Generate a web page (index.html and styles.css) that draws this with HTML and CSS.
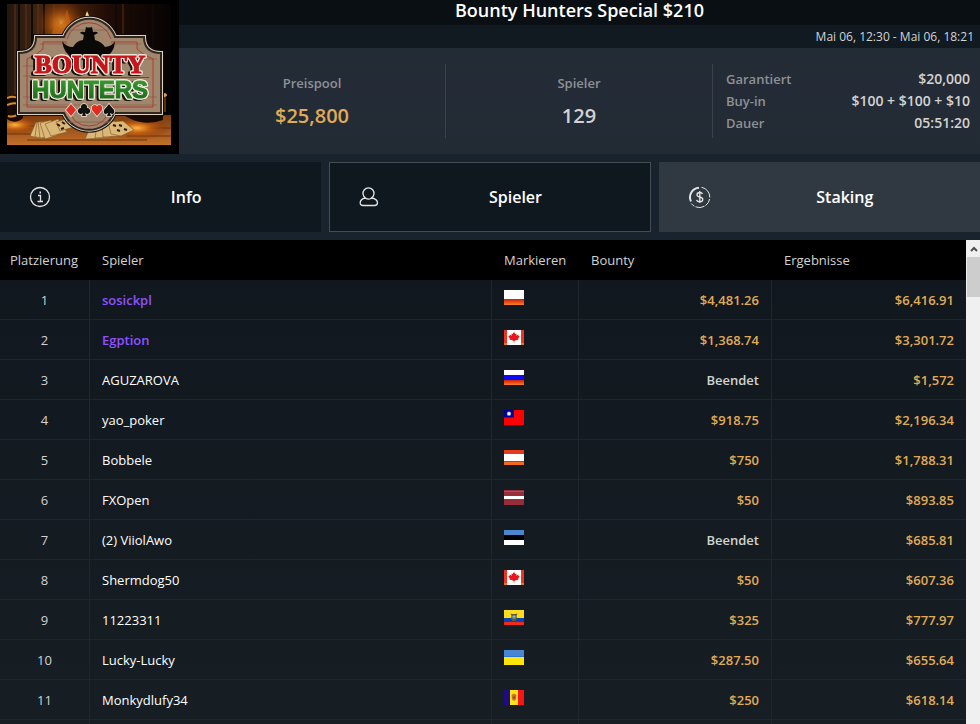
FILE: index.html
```html
<!DOCTYPE html>
<html lang="de">
<head>
    <meta charset="UTF-8">
    <meta name="viewport" content="width=device-width, initial-scale=1.0">
    <title>Bounty Hunters Special $210</title>
    <link rel="stylesheet" href="styles.css">
</head>
<body>
    <!-- Shared flag drawings -->
    <svg class="defs" width="0" height="0" aria-hidden="true">
        <defs>
            <linearGradient id="red-orange" x1="0" y1="0" x2="0" y2="1">
                <stop offset="0" stop-color="#d31a10"/>
                <stop offset="1" stop-color="#f5821e"/>
            </linearGradient>
            <symbol id="flag-pl" viewBox="0 0 20 15">
                <rect width="20" height="9" fill="#fff"/>
                <rect y="9" width="20" height="6" fill="url(#red-orange)"/>
            </symbol>
            <symbol id="flag-ca" viewBox="0 0 20 15">
                <rect width="20" height="15" fill="#fff"/>
                <rect width="3" height="15" fill="#f0321e"/>
                <rect x="17" width="3" height="15" fill="#f0321e"/>
                <rect y="13" width="3" height="2" fill="#f5701e"/>
                <rect x="17" y="13" width="3" height="2" fill="#f5701e"/>
                <path d="M10 2l1.3 2 1.2-.6-.2 2.4 2-1.2.2 1.3 1.3.3-1.6 2.2.5 1.2-3 .6-1.3 1h-.8l-1.3-1-3-.6.5-1.2-1.6-2.2 1.3-.3.2-1.3 2 1.2-.2-2.4 1.2.6z" fill="#e8151c"/>
                <rect x="9.6" y="10.500" width=".9" height="2.500" fill="#f5a08c"/>
            </symbol>
            <symbol id="flag-ru" viewBox="0 0 20 15">
                <rect width="20" height="5" fill="#fff"/>
                <rect y="5" width="20" height="5" fill="#0a0af5"/>
                <rect y="10" width="20" height="5" fill="url(#red-orange)"/>
            </symbol>
            <symbol id="flag-tw" viewBox="0 0 20 15">
                <rect width="20" height="15" fill="#fe0000"/>
                <rect width="10" height="7.500" fill="#000095"/>
                <circle cx="5" cy="3.700" r="2.200" fill="#8c8cd2"/>
                <circle cx="5" cy="3.700" r="1.400" fill="#fff"/>
            </symbol>
            <symbol id="flag-at" viewBox="0 0 20 15">
                <rect width="20" height="15" fill="#fff"/>
                <rect width="20" height="4" fill="#e33b1e"/>
                <rect y="11" width="20" height="4" fill="#ef6a1c"/>
                <rect y="11" width="20" height="1" fill="#dd2a1a"/>
            </symbol>
            <symbol id="flag-lv" viewBox="0 0 20 15">
                <rect width="20" height="15" fill="#982c39"/>
                <rect y="1" width="20" height="1" fill="#b04a55"/>
                <rect y="6" width="20" height="3" fill="#fff"/>
            </symbol>
            <symbol id="flag-ee" viewBox="0 0 20 15">
                <rect width="20" height="5" fill="#4a86cc"/>
                <rect y="5" width="20" height="5" fill="#000"/>
                <rect y="10" width="20" height="5" fill="#fff"/>
            </symbol>
            <symbol id="flag-ec" viewBox="0 0 20 15">
                <rect width="20" height="8" fill="#fbdc1e"/>
                <rect y="8" width="20" height="4" fill="#0842b4"/>
                <rect y="12" width="20" height="3" fill="#ef2b1c"/>
                <path d="M6.500 3.500q3.500 1 7 0l-1 2.500.5 2.500-1.500 2.500h-3l-1.500-2.500.5-2.500z" fill="#5d5a3a"/>
                <circle cx="10" cy="7" r="1.700" fill="#8cbcc8"/>
                <path d="M8.700 7.500h2.600l-1.300 1.300z" fill="#3c8a46"/>
            </symbol>
            <symbol id="flag-ua" viewBox="0 0 20 15">
                <rect width="20" height="8" fill="#4a86d2"/>
                <rect y="6" width="20" height="1" fill="#2f74d0"/>
                <rect y="7" width="20" height="8" fill="#ffe606"/>
            </symbol>
            <symbol id="flag-md" viewBox="0 0 20 15">
                <rect width="7" height="15" fill="#1c0c86"/>
                <rect x="6" width="8" height="15" fill="#ffe11a"/>
                <rect x="14" width="6" height="15" fill="#fa1414"/>
                <path d="M7.500 5q2.500-2.500 5 0l-.5 4.500-2 1.500-2-1.500z" fill="#c9762a"/>
                <circle cx="10" cy="7.500" r="1.200" fill="#b03a2a"/>
            </symbol>
        </defs>
    </svg>

    <div class="lobby">
        <header class="tournament">
            <div class="logo">
                <svg class="logo-art" viewBox="0 0 164 141" role="img" aria-label="Bounty Hunters">
                    <defs>
                        <linearGradient id="wall" x1="0" y1="0" x2="1" y2="0">
                            <stop offset="0" stop-color="#24170f"/>
                            <stop offset=".18" stop-color="#3d2412"/>
                            <stop offset=".35" stop-color="#4c240b"/>
                            <stop offset=".62" stop-color="#1f0c06"/>
                            <stop offset="1" stop-color="#060303"/>
                        </linearGradient>
                        <radialGradient id="fire">
                            <stop offset="0" stop-color="#ffb840"/>
                            <stop offset=".4" stop-color="#c9600f" stop-opacity=".8"/>
                            <stop offset="1" stop-color="#6b2606" stop-opacity="0"/>
                        </radialGradient>
                        <linearGradient id="desk" x1="0" y1="0" x2="0" y2="1">
                            <stop offset="0" stop-color="#7d3c0e"/>
                            <stop offset="1" stop-color="#c2702a"/>
                        </linearGradient>
                        <linearGradient id="green" x1="0" y1="0" x2="0" y2="1">
                            <stop offset="0" stop-color="#3da135"/>
                            <stop offset="1" stop-color="#17631a"/>
                        </linearGradient>
                        <path id="sign" d="M29 33H57A27 27 0 0 1 108 33H137Q137 49 154 49V109H107A27 27 0 0 1 57 109H12V49Q29 49 29 33Z"/>
                    </defs>
                    <!-- Saloon wall and table -->
                    <rect width="164" height="141" fill="url(#wall)"/>
                    <path d="M12 0V100M25 0V40M37 0V34M109 0V32M124 0V34M146 0V45" stroke="#120905" stroke-width="2"/>
                    <path d="M8 0V90M19 0V50M31 0V34M47 0V30M116 0V32" stroke="#70401b" stroke-width="1" opacity=".7"/>
                    <ellipse cx="54" cy="20" rx="26" ry="26" fill="url(#fire)" opacity=".8"/>
                    <path d="M45 30q3-10 6-16 2 10 6 3l3-12 4 15 8-8-5 22z" fill="#c9600f" opacity=".6"/>
                    <path d="M77 16l3-9 4 9z" fill="#ffd98a"/>
                    <path d="M0 111H164V141H0z" fill="url(#desk)"/>
                    <path d="M0 122H60M98 124H164M20 136H140M0 130H35M120 132H164" stroke="#713209" stroke-width="1"/>
                    <ellipse cx="8" cy="121" rx="28" ry="10" fill="url(#fire)"/>
                    <ellipse cx="130" cy="124" rx="34" ry="12" fill="url(#fire)"/>
                    <path d="M0 93q9-4 16 2v19q-8 7-16 1z" fill="#1a0a04"/>
                    <path d="M0 94q7-3 12 1M0 101q6-3 12-1M1 112q6 2 12-3" stroke="#d98c2c" stroke-width="2" fill="none"/>
                    <path d="M118 112q20-8 38-3v7q-17 6-32-1z" fill="#160903"/>
                    <path d="M151 89h8v19h-8z" fill="#54300e"/>
                    <ellipse cx="155" cy="91" rx="5" ry="2" fill="#e0a040"/>
                    <!-- Playing cards -->
                    <g fill="#d9b878" stroke="#80521f" stroke-width=".6">
                        <path d="M23 132l6-14 10 3-4 14z"/>
                        <path d="M28 133l2-15 11 1-1 15z"/>
                        <path d="M33 134l-2-16 11-1 3 16z"/>
                        <path d="M38 135l-5-16 11-3 7 15z"/>
                        <path d="M44 132l-6-12 13-5 9 13z"/>
                        <path d="M53 127l-4-9 10-3 8 8z"/>
                        <path d="M78 135l5-11 15-1 4 11z"/>
                        <path d="M88 134l2-13 12-1 2 13z"/>
                        <path d="M96 133l-1-13 12-3 6 15z"/>
                        <path d="M104 130l-3-12 15-1 11 9-13 6z"/>
                    </g>
                    <path d="M50 120l3 2M55 118l3 2M54 125l3-1M106 121l3 1M112 121l3 1M110 126l3 1M117 125l3 1" stroke="#2c1a0c" stroke-width="2"/>
                    <!-- Wooden sign -->
                    <use href="#sign" fill="#120d0b" stroke="#120d0b" stroke-width="6"/>
                    <use href="#sign" fill="#a18468" stroke="#d8d0be" stroke-width="4"/>
                    <use href="#sign" fill="#a0866d" stroke="#33261f" stroke-width="2"/>
                    <path d="M16 62H42M16 72H28M16 93H150M16 101H150M130 55H150M60 118H104M62 26H102M33 40H60M104 40H134" stroke="#896b52" stroke-width="1"/>
                    <path d="M60 38H36V45Q30 51 20 55V103H60Q66 122 82 122T104 103H146V55Q136 51 130 45V38H104M60 35A23 23 0 0 1 104 35" fill="none" stroke="#aa3f35" stroke-width="1"/>
                    <!-- Hat and shoulders -->
                    <path d="M73 29q4 3 9 3t9-3q-1-2-5-1l-1-5q-3 1-6 0l-1 5q-4-1-5 1z" fill="#0b0908"/>
                    <path d="M77 30h10l1 6q7 2 10 7 8-1 10-6-1 15-14 17H67Q57 51 55 37q4 6 11 6 3-6 10-7z" fill="#0b0908"/>
                    <path d="M23 73.500H142" stroke="#ad302b" stroke-width="1"/>
                    <g class="logo-text" text-anchor="middle">
                        <text class="word-bounty" x="83" y="69">BOUNTY</text>
                        <text class="word-hunters" x="83" y="94">HUNTERS</text>
                    </g>
                    <!-- Card suits -->
                    <g stroke="#eee4d6" stroke-width="1.500" paint-order="stroke">
                        <path d="M64 100l5 6-5 6-5-6z" fill="#e12a23"/>
                        <path d="M77 100a3 3 0 0 1 3 4 3 3 0 1 1-2 5l1 3h-4l1-3a3 3 0 1 1-2-5 3 3 0 0 1 3-4z" fill="#111"/>
                        <path d="M90 112l-5-6q-1-5 3-5 2 0 2 2 0-2 2-2 4 0 3 5z" fill="#e12a23"/>
                        <path d="M102 100l5 6q1 4-2 4l-2-1 1 3h-4l1-3-2 1q-3 0-2-4z" fill="#111"/>
                    </g>
                </svg>
            </div>

            <div class="summary">
                <h1 class="title">Bounty Hunters Special $210</h1>
                <p class="dates">Mai 06, 12:30 - Mai 06, 18:21</p>
                <div class="stats">
                    <div class="stat">
                        <span class="stat-label">Preispool</span>
                        <span class="stat-value money">$25,800</span>
                    </div>
                    <div class="stat">
                        <span class="stat-label">Spieler</span>
                        <span class="stat-value">129</span>
                    </div>
                    <dl class="details">
                        <div class="detail"><dt>Garantiert</dt><dd>$20,000</dd></div>
                        <div class="detail"><dt>Buy-in</dt><dd>$100 + $100 + $10</dd></div>
                        <div class="detail"><dt>Dauer</dt><dd>05:51:20</dd></div>
                    </dl>
                </div>
            </div>
        </header>

        <nav class="tabs">
            <button class="tab" type="button">
                <svg class="tab-icon" viewBox="0 0 24 24" aria-hidden="true">
                    <circle cx="12" cy="12" r="9.500"/>
                    <path d="M10 10.500h2.500V16M9.500 16.500h5.500"/>
                    <path d="M11.500 7.500h1.500" stroke-width="2"/>
                </svg>
                <span class="tab-label">Info</span>
            </button>
            <button class="tab tab-active" type="button">
                <svg class="tab-icon" viewBox="0 0 24 24" aria-hidden="true">
                    <path d="M8.500 13A5.500 5.500 0 1 1 14.500 13Q20.500 14 20.500 17.800 20.500 20.500 17.500 20.500H6Q3.200 20.500 3.200 17.800 3.200 14 8.500 13Q10 14.200 11.500 14.200T14.500 13"/>
                </svg>
                <span class="tab-label">Spieler</span>
            </button>
            <button class="tab tab-light" type="button">
                <svg class="tab-icon" viewBox="0 0 24 24" aria-hidden="true">
                    <path d="M14.500 2.300A10 10 0 0 1 22.800 12.500M22.600 14A10 10 0 0 1 18.500 20.600M17.500 21.200A10 10 0 0 1 8.500 21.800M7.300 21.200A10 10 0 0 1 4.300 18.500" stroke-width="1"/>
                    <path d="M12 2.800A9.500 9.500 0 0 0 4 16.500" stroke-width="2"/>
                    <path d="M15.500 9Q15 7.500 12.800 7.500 10 7.500 10 9.700 10 11.400 12.800 12 15.800 12.600 15.800 14.500 15.800 16.700 12.800 16.700 10 16.700 9.700 14.900M12.800 6v12"/>
                </svg>
                <span class="tab-label">Staking</span>
            </button>
        </nav>

        <main class="list">
            <table class="players">
                <colgroup>
                    <col class="col-rank">
                    <col>
                    <col class="col-flag">
                    <col class="col-bounty">
                    <col class="col-result">
                </colgroup>
                <thead>
                    <tr>
                        <th class="rank-head">Platzierung</th>
                        <th>Spieler</th>
                        <th>Markieren</th>
                        <th>Bounty</th>
                        <th>Ergebnisse</th>
                    </tr>
                </thead>
                <tbody>
                    <tr><td class="rank">1</td><td class="name marked">sosickpl</td><td><svg class="flag"><use href="#flag-pl"/></svg></td><td class="amount">$4,481.26</td><td class="amount">$6,416.91</td></tr>
                    <tr><td class="rank">2</td><td class="name marked">Egption</td><td><svg class="flag"><use href="#flag-ca"/></svg></td><td class="amount">$1,368.74</td><td class="amount">$3,301.72</td></tr>
                    <tr><td class="rank">3</td><td class="name">AGUZAROVA</td><td><svg class="flag"><use href="#flag-ru"/></svg></td><td class="amount ended">Beendet</td><td class="amount">$1,572</td></tr>
                    <tr><td class="rank">4</td><td class="name">yao_poker</td><td><svg class="flag"><use href="#flag-tw"/></svg></td><td class="amount">$918.75</td><td class="amount">$2,196.34</td></tr>
                    <tr><td class="rank">5</td><td class="name">Bobbele</td><td><svg class="flag"><use href="#flag-at"/></svg></td><td class="amount">$750</td><td class="amount">$1,788.31</td></tr>
                    <tr><td class="rank">6</td><td class="name">FXOpen</td><td><svg class="flag"><use href="#flag-lv"/></svg></td><td class="amount">$50</td><td class="amount">$893.85</td></tr>
                    <tr><td class="rank">7</td><td class="name">(2) ViiolAwo</td><td><svg class="flag"><use href="#flag-ee"/></svg></td><td class="amount ended">Beendet</td><td class="amount">$685.81</td></tr>
                    <tr><td class="rank">8</td><td class="name">Shermdog50</td><td><svg class="flag"><use href="#flag-ca"/></svg></td><td class="amount">$50</td><td class="amount">$607.36</td></tr>
                    <tr><td class="rank">9</td><td class="name">11223311</td><td><svg class="flag"><use href="#flag-ec"/></svg></td><td class="amount">$325</td><td class="amount">$777.97</td></tr>
                    <tr><td class="rank">10</td><td class="name">Lucky-Lucky</td><td><svg class="flag"><use href="#flag-ua"/></svg></td><td class="amount">$287.50</td><td class="amount">$655.64</td></tr>
                    <tr><td class="rank">11</td><td class="name">Monkydlufy34</td><td><svg class="flag"><use href="#flag-md"/></svg></td><td class="amount">$250</td><td class="amount">$618.14</td></tr>
                    <tr><td></td><td></td><td></td><td></td><td></td></tr>
                </tbody>
            </table>
            <div class="scrollbar">
                <button class="scroll-up" type="button" aria-label="Nach oben">
                    <svg viewBox="0 0 8 6" width="8" height="6" aria-hidden="true"><path d="M1 5l3-3 3 3"/></svg>
                </button>
                <div class="scroll-thumb"></div>
            </div>
        </main>
    </div>
</body>
</html>
```
FILE: styles.css
```css
* {
    box-sizing: border-box;
}
body {
    margin: 0;
    background-color: #19232d;
    color: #d3d3d3;
    font-family: "Open Sans", sans-serif;
    font-size: 13px;
}
.defs {
    position: absolute;
}
.lobby {
    display: flex;
    flex-direction: column;
    height: 100vh;
    overflow: hidden;
}

/* Tournament header */
.tournament {
    display: flex;
    flex-shrink: 0;
}
.logo {
    background-color: #000;
    padding: 4px 8px 9px 7px;
}
.logo-art {
    display: block;
    width: 164px;
    height: 141px;
}
.logo-text {
    font-weight: bold;
    stroke-width: 1px;
    filter: drop-shadow(1px 0 0 #f3ebdd) drop-shadow(-1px 0 0 #f3ebdd) drop-shadow(0 1px 0 #f3ebdd) drop-shadow(0 -1px 0 #f3ebdd) drop-shadow(-2px 1px 0 #17110e);
}
.word-bounty {
    fill: #c4161c;
    stroke: #c4161c;
    font-family: "Liberation Serif", serif;
    font-size: 26px;
}
.word-hunters {
    fill: url(#green);
    stroke: url(#green);
    font-family: "Liberation Sans", sans-serif;
    font-size: 24px;
}
.summary {
    display: flex;
    flex-direction: column;
    flex: 1;
}
.title {
    margin: 0;
    height: 25px;
    background-color: #0a0f13;
    color: #fff;
    font-size: 18px;
    font-weight: 600;
    line-height: 21px;
    text-align: center;
}
.dates {
    margin: 0;
    padding-right: 6px;
    background-color: #111921;
    font-size: 12px;
    line-height: 23px;
    text-align: right;
}
.stats {
    display: grid;
    grid-template-columns: repeat(3, 1fr);
    flex: 1;
    padding: 16px 0;
    background: linear-gradient(#222c34, #242b37 35%, #222b34);
}
.stat {
    display: flex;
    flex-direction: column;
    align-items: center;
    border-right: 1px solid #3a424b;
    padding-top: 10px;
    font-weight: 600;
}
.stat-label {
    color: #8e9194;
    line-height: 18px;
}
.stat-value {
    margin-top: 10px;
    font-size: 20px;
    line-height: 28px;
}
.money {
    color: #e0ab56;
}
.details {
    margin: 0;
    padding: 4px 10px 0 13px;
    font-weight: 600;
    line-height: 22px;
}
.detail {
    display: flex;
    justify-content: space-between;
}
.detail dt {
    color: #8e9194;
}
.detail dd {
    margin: 0;
    font-size: 14px;
}

/* Tabs */
.tabs {
    display: grid;
    grid-template-columns: repeat(3, 1fr);
    gap: 8px;
    flex-shrink: 0;
    padding: 8px 0;
}
.tab {
    display: flex;
    align-items: center;
    height: 70px;
    border: 1px solid transparent;
    padding: 0 0 0 27px;
    background-color: #10181f;
    color: #fff;
    font-family: inherit;
    font-size: 16px;
    font-weight: 600;
    cursor: pointer;
}
.tab-active {
    border-color: #444c54;
}
.tab-light {
    background-color: #303942;
}
.tab-icon {
    width: 24px;
    height: 24px;
    fill: none;
    stroke: #e4e4e4;
    stroke-width: 1.3;
}
.tab-label {
    flex: 1;
    text-align: center;
}

/* Player list */
.list {
    display: flex;
    flex: 1;
    min-height: 0;
    background-color: #161d23;
}
.players {
    flex: 1;
    align-self: flex-start;
    table-layout: fixed;
    border-collapse: separate;
    border-spacing: 0;
    background: linear-gradient(#10171e, #171e24);
}
.col-rank {
    width: 90px;
}
.col-flag {
    width: 87px;
}
.col-bounty {
    width: 193px;
}
.col-result {
    width: 194px;
}
.players th {
    height: 40px;
    padding: 0 12px;
    background-color: #000;
    font-weight: 400;
    text-align: left;
}
.players .rank-head {
    padding: 0 10px;
}
.players td {
    height: 40px;
    border-right: 1px solid #1f262d;
    border-bottom: 1px solid #1f262d;
    padding: 0 12px;
}
.players td:last-child {
    border-right: none;
}
.players .rank {
    text-align: center;
}
.name {
    color: #fff;
}
.marked {
    color: #8f52ff;
    font-weight: 600;
}
.players .amount {
    color: #e0ab56;
    font-weight: 600;
    text-align: right;
}
.players .ended {
    color: #d3d3d3;
}
.flag {
    width: 20px;
    height: 15px;
    vertical-align: baseline;
}
.scrollbar {
    width: 14px;
    padding-left: 1px;
    background-color: #f0f0f0;
}
.scroll-up {
    display: flex;
    align-items: center;
    justify-content: center;
    width: 100%;
    height: 17px;
    border: none;
    padding: 0;
    background: none;
}
.scroll-up path {
    fill: none;
    stroke: #505050;
    stroke-width: 2;
}
.scroll-thumb {
    height: 40px;
    background-color: #cdcdcd;
}
```
